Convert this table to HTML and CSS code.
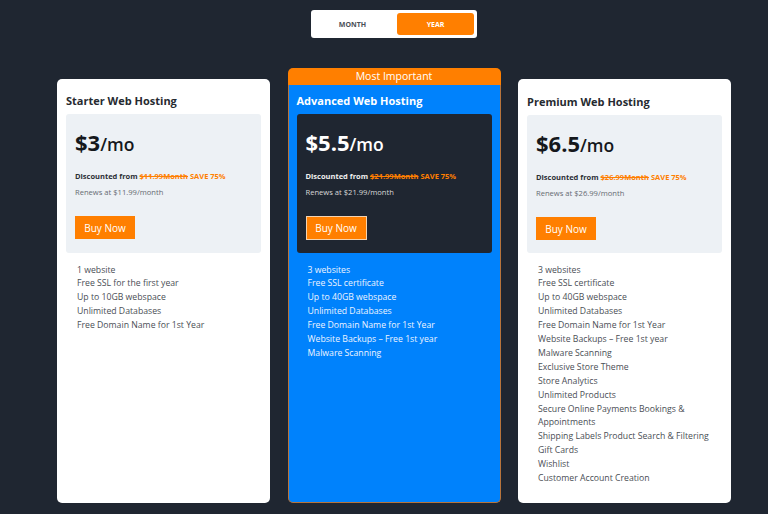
FILE: index.html
```html
<!DOCTYPE html>
<html>
<head>
<meta charset="utf-8">
<link rel="stylesheet" href="styles.css">
</head>
<body>
<div class="page">
  <div class="toggle">
    <button class="tog">MONTH</button>
    <button class="tog active">YEAR</button>
  </div>
  <div class="plans">
    <div class="card side">
      <h3 class="title">Starter Web Hosting</h3>
      <div class="box">
        <div class="price"><span class="amt">$3</span><span class="per">/mo</span></div>
        <div class="disc">Discounted from <s class="old">$11.99Month</s> <span class="save">SAVE 75%</span></div>
        <div class="renew">Renews at $11.99/month</div>
        <button class="buy">Buy Now</button>
      </div>
      <ul class="feats">
        <li>1 website</li>
        <li>Free SSL for the first year</li>
        <li>Up to 10GB webspace</li>
        <li>Unlimited Databases</li>
        <li>Free Domain Name for 1st Year</li>
      </ul>
    </div>
    <div class="featured">
      <div class="badge">Most Important</div>
      <div class="card hot">
        <h3 class="title">Advanced Web Hosting</h3>
        <div class="box dark">
          <div class="price"><span class="amt">$5.5</span><span class="per">/mo</span></div>
          <div class="disc">Discounted from <s class="old">$21.99Month</s> <span class="save">SAVE 75%</span></div>
          <div class="renew">Renews at $21.99/month</div>
          <button class="buy outlined">Buy Now</button>
        </div>
        <ul class="feats">
          <li>3 websites</li>
          <li>Free SSL certificate</li>
          <li>Up to 40GB webspace</li>
          <li>Unlimited Databases</li>
          <li>Free Domain Name for 1st Year</li>
          <li>Website Backups – Free 1st year</li>
          <li>Malware Scanning</li>
        </ul>
      </div>
    </div>
    <div class="card side third">
      <h3 class="title">Premium Web Hosting</h3>
      <div class="box">
        <div class="price"><span class="amt">$6.5</span><span class="per">/mo</span></div>
        <div class="disc">Discounted from <s class="old">$26.99Month</s> <span class="save">SAVE 75%</span></div>
        <div class="renew">Renews at $26.99/month</div>
        <button class="buy">Buy Now</button>
      </div>
      <ul class="feats">
        <li>3 websites</li>
        <li>Free SSL certificate</li>
        <li>Up to 40GB webspace</li>
        <li>Unlimited Databases</li>
        <li>Free Domain Name for 1st Year</li>
        <li>Website Backups – Free 1st year</li>
        <li>Malware Scanning</li>
        <li>Exclusive Store Theme</li>
        <li>Store Analytics</li>
        <li>Unlimited Products</li>
        <li>Secure Online Payments Bookings &amp; Appointments</li>
        <li>Shipping Labels Product Search &amp; Filtering</li>
        <li>Gift Cards</li>
        <li>Wishlist</li>
        <li>Customer Account Creation</li>
      </ul>
    </div>
  </div>
</div>
</body>
</html>
```
FILE: styles.css
```css
* { box-sizing: border-box; }
html, body { margin: 0; padding: 0; }
body {
  background: #1f2631;
  font-family: "Open Sans", "Noto Sans", sans-serif;
  width: 768px;
  height: 514px;
  overflow: hidden;
}
.page {
  padding-left: 20px;
  padding-top: 10px;
  display: flex;
  flex-direction: column;
  align-items: center;
}
.toggle {
  width: 166px;
  height: 28px;
  background: #fff;
  border-radius: 3px;
  padding: 3px;
  display: flex;
  gap: 2px;
}
.tog {
  flex: 1;
  border: 0;
  background: transparent;
  font-family: inherit;
  font-size: 7px;
  font-weight: 700;
  color: #4a4f57;
  border-radius: 3px;
  padding: 0;
  padding-right: 4px;
}
.tog.active {
  background: #ff7f00;
  color: #fff;
  padding-right: 0;
}
.plans {
  margin-top: 30px;
  display: flex;
  gap: 17.5px;
  height: 435px;
}
.card {
  width: 213px;
  border-radius: 5px;
  padding: 15px 9px 0;
}
.side {
  background: #fff;
  margin-top: 11px;
}
.third { padding-top: 16px; }
.featured {
  width: 213px;
  display: flex;
  flex-direction: column;
}
.badge {
  height: 17px;
  background: #ff7f00;
  color: #fff;
  font-size: 10.5px;
  line-height: 16px;
  text-align: center;
  border-radius: 5px 5px 0 0;
}
.hot {
  flex: 1;
  background: #0082fc;
  border: 1px solid #b8743c;
  border-top: 0;
  border-radius: 0 0 5px 5px;
  padding: 9px 8px 0;
}
.title {
  margin: 0 0 6px;
  font-size: 11px;
  line-height: 14px;
  font-weight: 700;
  color: #262a30;
}
.hot .title { color: #fff; }
.box {
  background: #edf1f5;
  border-radius: 3px;
  padding: 15px 9px 14px;
  height: 139px;
}
.third .box { height: 138px; }
.box.dark { background: #1f2631; }
.price {
  height: 26px;
  line-height: 26px;
  color: #15181c;
  white-space: nowrap;
}
.dark .price { color: #fff; }
.amt { font-size: 22px; font-weight: 700; }
.per { font-size: 17.5px; font-weight: 600; }
.disc {
  margin-top: 15.5px;
  font-size: 7.5px;
  line-height: 11px;
  font-weight: 700;
  color: #2b2f35;
  white-space: nowrap;
}
.dark .disc { color: #f0f0f0; }
.old { color: #ff7f00; }
.save { color: #ff7f00; }
.renew {
  margin-top: 5px;
  font-size: 7.6px;
  line-height: 11px;
  color: #666b72;
}
.dark .renew { color: #d8d8d8; }
.buy {
  display: block;
  margin-top: 18.5px;
  width: 60px;
  height: 23px;
  border: 0;
  background: #ff7f00;
  color: #fff;
  font-family: inherit;
  font-size: 10px;
  padding: 0;
}
.buy.outlined { border: 1px solid #f4d3b0; width: 61px; height: 24px; }
.feats {
  list-style: none;
  margin: 10.5px 0 0;
  padding: 0 0 0 11px;
  font-size: 8.7px;
  line-height: 13.9px;
  color: #4a4e55;
}
.hot .feats { color: #eef4ff; padding-left: 11px; }
```
